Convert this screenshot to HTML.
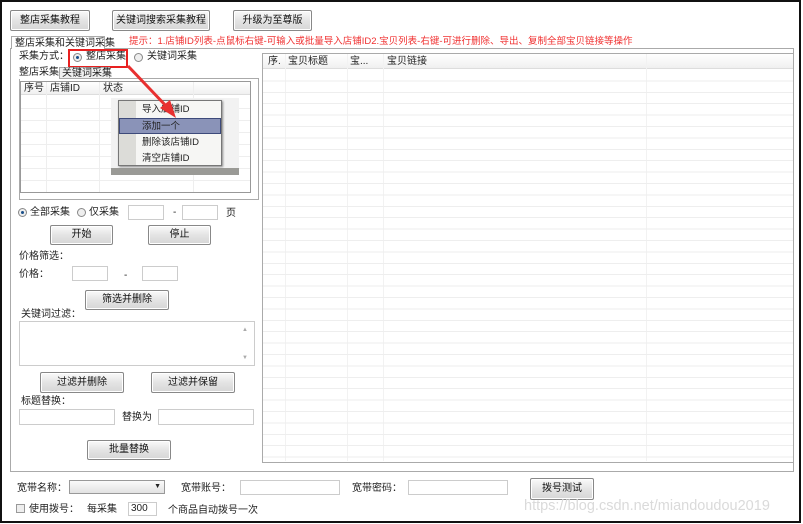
<!DOCTYPE html>
<html><head><meta charset="utf-8"><style>
*{margin:0;padding:0;box-sizing:border-box}
body{width:803px;height:524px;background:#fff;position:relative;overflow:hidden;font-family:"Liberation Sans","Noto Sans CJK SC",sans-serif;font-size:10px;line-height:16px;color:#222}
.a{position:absolute;white-space:nowrap}
.frame{position:absolute;left:0;top:0;width:801px;height:523px;border:2px solid #111;background:#fff}
.btn{position:absolute;border:1px solid #888;border-radius:2px;background:linear-gradient(#fafafa,#e4e4e4 50%,#d6d6d6);text-align:center;font-size:10px;color:#111;box-shadow:inset 0 0 0 1px #fff}
.in{position:absolute;border:1px solid #ccc;background:#fff}
.radio{position:absolute;width:9px;height:9px;border:1px solid #888;border-radius:50%;background:#eee}
.radio.on::after{content:"";position:absolute;left:2px;top:2px;width:3px;height:3px;border-radius:50%;background:#1a4f8a}
.hl{position:absolute;height:1px;background:#eee}
.vl{position:absolute;width:1px;background:#eee}
</style></head><body>
<div class="frame"></div>
<div class="btn" style="left:10px;top:10px;width:80px;height:21px;line-height:19px">整店采集教程</div>
<div class="btn" style="left:112px;top:10px;width:98px;height:21px;line-height:19px">关键词搜索采集教程</div>
<div class="btn" style="left:233px;top:10px;width:79px;height:21px;line-height:19px">升级为至尊版</div>

<div class="a" style="left:10px;top:48px;width:784px;height:424px;border:1px solid #aaa"></div>
<div class="a" style="left:11px;top:36px;width:94px;height:13px;border:1px solid #aaa;border-bottom:none;background:#fff;line-height:13px;padding-left:3px">整店采集和关键词采集</div>
<div class="a" style="left:129px;top:34px;color:#f03030;font-size:9.5px">提示：1.店铺ID列表-点鼠标右键-可输入或批量导入店铺ID2.宝贝列表-右键-可进行删除、导出、复制全部宝贝链接等操作</div>

<div class="a" style="left:19px;top:49px">采集方式：</div>
<div class="radio on" style="left:73px;top:53px"></div>
<div class="a" style="left:86px;top:49px">整店采集</div>
<div class="a" style="left:68px;top:49px;width:60px;height:19px;border:2px solid #e82020"></div>
<div class="radio" style="left:134px;top:53px"></div>
<div class="a" style="left:147px;top:49px">关键词采集</div>

<div class="a" style="left:19px;top:78px;width:240px;height:122px;border:1px solid #aaa"></div>
<div class="a" style="left:16px;top:66px;width:43px;height:13px;background:#fff;line-height:13px;padding-left:3px">整店采集</div>
<div class="a" style="left:59px;top:67px;width:51px;height:12px;border:1px solid #aaa;background:#f0f0f0;line-height:11px;padding-left:2px">关键词采集</div>
<div class="a" style="left:20px;top:81px;width:231px;height:112px;border:1px solid #999;background:#fff"></div>
<div class="a" style="left:21px;top:82px;width:229px;height:13px;background:linear-gradient(#fff,#f0f0f0);border-bottom:1px solid #ddd"></div>
<div class="a" style="left:24px;top:81px">序号</div><div class="a" style="left:50px;top:81px">店铺ID</div><div class="a" style="left:103px;top:81px">状态</div>
<div class="vl" style="left:46px;top:82px;height:110px"></div><div class="vl" style="left:99px;top:82px;height:110px"></div><div class="vl" style="left:193px;top:82px;height:110px"></div>
<div class="hl" style="left:21px;top:108px;width:229px"></div><div class="hl" style="left:21px;top:120px;width:229px"></div><div class="hl" style="left:21px;top:132px;width:229px"></div><div class="hl" style="left:21px;top:144px;width:229px"></div><div class="hl" style="left:21px;top:156px;width:229px"></div><div class="hl" style="left:21px;top:168px;width:229px"></div><div class="hl" style="left:21px;top:180px;width:229px"></div>
<div class="a" style="left:111px;top:98px;width:128px;height:77px;background:#f2f2f2"></div>
<div class="a" style="left:111px;top:168px;width:128px;height:7px;background:#9a9a96"></div>
<div class="a" style="left:118px;top:100px;width:104px;height:66px;border:1px solid #777;background:#f6f6f4;box-shadow:1px 1px 2px #888"></div>
<div class="a" style="left:119px;top:101px;width:17px;height:64px;background:#dcdcd8"></div>
<div class="a" style="left:119px;top:118px;width:102px;height:16px;background:#8a93b8;border:1px solid #3d4a7a"></div>
<div class="a" style="left:142px;top:102px;font-size:9.5px">导入店铺ID</div>
<div class="a" style="left:142px;top:119px;font-size:9.5px">添加一个</div>
<div class="a" style="left:142px;top:135px;font-size:9.5px">删除该店铺ID</div>
<div class="a" style="left:142px;top:151px;font-size:9.5px">清空店铺ID</div>
<svg class="a" style="left:0;top:0" width="803" height="524"><line x1="128" y1="66" x2="168" y2="108" stroke="#e83030" stroke-width="3"/><polygon points="176,118 160,108 170,100" fill="#e83030"/></svg>

<div class="radio on" style="left:18px;top:208px"></div><div class="a" style="left:30px;top:205px">全部采集</div>
<div class="radio" style="left:77px;top:208px"></div><div class="a" style="left:89px;top:205px">仅采集</div>
<div class="in" style="left:128px;top:205px;width:36px;height:15px"></div><div class="a" style="left:173px;top:205px">-</div>
<div class="in" style="left:182px;top:205px;width:36px;height:15px"></div><div class="a" style="left:226px;top:206px">页</div>
<div class="btn" style="left:50px;top:225px;width:63px;height:20px;line-height:18px">开始</div>
<div class="btn" style="left:148px;top:225px;width:63px;height:20px;line-height:18px">停止</div>
<div class="a" style="left:19px;top:249px">价格筛选：</div>
<div class="a" style="left:19px;top:267px">价格：</div>
<div class="in" style="left:72px;top:266px;width:36px;height:15px"></div><div class="a" style="left:124px;top:268px">-</div>
<div class="in" style="left:142px;top:266px;width:36px;height:15px"></div>
<div class="btn" style="left:85px;top:290px;width:84px;height:20px;line-height:18px">筛选并删除</div>
<div class="a" style="left:21px;top:307px">关键词过滤：</div>
<div class="in" style="left:19px;top:321px;width:236px;height:45px"></div>
<div class="a" style="left:242px;top:322px;font-size:6px;color:#aaa">▲</div><div class="a" style="left:242px;top:350px;font-size:6px;color:#aaa">▼</div>
<div class="btn" style="left:40px;top:372px;width:84px;height:21px;line-height:19px">过滤并删除</div>
<div class="btn" style="left:151px;top:372px;width:84px;height:21px;line-height:19px">过滤并保留</div>
<div class="a" style="left:21px;top:394px">标题替换：</div>
<div class="in" style="left:19px;top:409px;width:96px;height:16px"></div>
<div class="a" style="left:122px;top:410px">替换为</div>
<div class="in" style="left:158px;top:409px;width:96px;height:16px"></div>
<div class="btn" style="left:87px;top:440px;width:84px;height:20px;line-height:18px">批量替换</div>

<div class="a" style="left:262px;top:53px;width:532px;height:410px;border:1px solid #aaa;background:#fff"></div>
<div class="a" style="left:263px;top:54px;width:530px;height:15px;background:linear-gradient(#fff,#f0f0f0);border-bottom:1px solid #ddd"></div>
<div class="a" style="left:268px;top:54px">序.</div><div class="a" style="left:288px;top:54px">宝贝标题</div><div class="a" style="left:350px;top:54px">宝...</div><div class="a" style="left:387px;top:54px">宝贝链接</div>
<div class="vl" style="left:285px;top:54px;height:407px;background:#f2f2f2"></div><div class="vl" style="left:347px;top:54px;height:407px;background:#f2f2f2"></div><div class="vl" style="left:383px;top:54px;height:407px;background:#f2f2f2"></div><div class="vl" style="left:646px;top:54px;height:407px;background:#f2f2f2"></div>
<div class="a" style="left:263px;top:70px;width:530px;height:392px;background:repeating-linear-gradient(to bottom,transparent 0,transparent 10.4px,#eee 10.4px,#eee 11.4px)"></div>

<div class="a" style="left:17px;top:481px">宽带名称：</div>
<div class="a" style="left:69px;top:480px;width:96px;height:14px;border:1px solid #999;background:linear-gradient(#fafafa,#e2e2e2)"><span style="position:absolute;right:3px;top:-2px;font-size:7px">▼</span></div>
<div class="a" style="left:181px;top:481px">宽带账号：</div>
<div class="in" style="left:240px;top:480px;width:100px;height:15px"></div>
<div class="a" style="left:352px;top:481px">宽带密码：</div>
<div class="in" style="left:408px;top:480px;width:100px;height:15px"></div>
<div class="btn" style="left:530px;top:478px;width:64px;height:22px;line-height:20px">拨号测试</div>
<div class="a" style="left:16px;top:504px;width:9px;height:9px;border:1px solid #999;background:#eee"></div>
<div class="a" style="left:29px;top:502px">使用拨号：</div>
<div class="a" style="left:87px;top:502px">每采集</div>
<div class="in" style="left:128px;top:502px;width:29px;height:14px;padding-left:2px;line-height:11px">300</div>
<div class="a" style="left:168px;top:503px">个商品自动拨号一次</div>
<div class="a" style="left:524px;top:498px;font-size:14.5px;line-height:17px;color:#dadada">https://blog.csdn.net/miandoudou2019</div>
</body></html>
